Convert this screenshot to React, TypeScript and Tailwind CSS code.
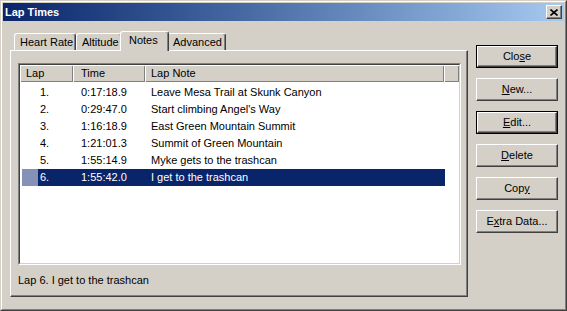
import React from 'react';

const laps = [
  { n: '1.', t: '0:17:18.9', note: 'Leave Mesa Trail at Skunk Canyon' },
  { n: '2.', t: '0:29:47.0', note: "Start climbing Angel's Way" },
  { n: '3.', t: '1:16:18.9', note: 'East Green Mountain Summit' },
  { n: '4.', t: '1:21:01.3', note: 'Summit of Green Mountain' },
  { n: '5.', t: '1:55:14.9', note: 'Myke gets to the trashcan' },
  { n: '6.', t: '1:55:42.0', note: 'I get to the trashcan' },
];

const Btn: React.FC<{ children: React.ReactNode; dflt?: boolean }> = ({ children, dflt }) => (
  <div className={`w-[82px] h-[23px] ${dflt ? 'border border-black' : ''}`}>
    <div className="w-full h-full bg-[#d4d0c8] border border-t-white border-l-white border-r-[#404040] border-b-[#404040] shadow-[inset_-1px_-1px_#808080] flex items-center justify-center leading-[13px]">
      {children}
    </div>
  </div>
);

const Tab: React.FC<{ label: string; w: string; active?: boolean }> = ({ label, w, active }) =>
  active ? (
    <div className={`${w} h-[20px] -mx-[2px] -mb-px relative z-10 bg-[#d4d0c8] rounded-t-[3px] border-l border-t border-white border-r border-r-[#404040] shadow-[inset_-1px_0_#808080] pt-[2px] pl-[8px] leading-[13px]`}>
      {label}
    </div>
  ) : (
    <div className={`${w} h-[17px] bg-[#d4d0c8] rounded-t-[3px] border-l border-t border-white border-r border-r-[#404040] shadow-[inset_-1px_0_#808080] pt-[2px] pl-[5px] leading-[13px]`}>
      {label}
    </div>
  );

const HeaderCell: React.FC<{ w: string; pl: string; children?: React.ReactNode }> = ({ w, pl, children }) => (
  <div className={`${w} h-full ${pl} flex items-center bg-[#d4d0c8] shadow-[inset_1px_1px_#fff,inset_-1px_-1px_#808080]`}>{children}</div>
);

export default function App() {
  return (
    <div className="w-[567px] h-[311px] bg-[#d4d0c8] font-['Liberation_Sans',Arial,sans-serif] text-[11px] text-black border border-t-[#d4d0c8] border-l-[#d4d0c8] border-r-[#404040] border-b-[#404040] overflow-hidden">
      <div className="w-full h-full border border-t-white border-l-white border-r-[#808080] border-b-[#808080] p-px flex flex-col">
        {/* title bar */}
        <div className="h-[18px] shrink-0 bg-linear-to-r from-[#0a246a] to-[#a6caf0] flex items-center justify-between pl-[2px] pr-[2px]">
          <span className="text-white font-bold text-[11px] leading-[13px]">Lap Times</span>
          <div className="w-[16px] h-[14px] bg-[#d4d0c8] border border-t-white border-l-white border-r-[#404040] border-b-[#404040] shadow-[inset_-1px_-1px_#808080] flex items-center justify-center">
            <svg width="8" height="7" viewBox="0 0 8 7">
              <path d="M0.5 0.5 L7.5 6.5 M7.5 0.5 L0.5 6.5" stroke="#000" strokeWidth="1.6" />
            </svg>
          </div>
        </div>

        <div className="flex items-start">
          {/* left tab control */}
          <div className="ml-[7px] pt-[10px] w-[458px]">
            <div className="h-[19px] flex items-end pl-[4px]">
              <Tab label="Heart Rate" w="w-[62px]" />
              <Tab label="Altitude" w="w-[46px]" />
              <Tab label="Notes" w="w-[49px]" active />
              <Tab label="Advanced" w="w-[59px]" />
            </div>
            <div className="h-[247px] border border-t-white border-l-white border-r-[#404040] border-b-[#404040] shadow-[inset_-1px_-1px_#808080] pl-[7px] pt-[12px]">
              {/* list view */}
              <div className="w-[443px] h-[202px] border border-t-[#808080] border-l-[#808080] border-r-white border-b-white">
                <div className="w-full h-full border border-t-[#404040] border-l-[#404040] border-r-[#d4d0c8] border-b-[#d4d0c8] bg-white overflow-hidden">
                  <div className="h-[17px] flex leading-[13px]">
                    <HeaderCell w="w-[53px]" pl="pl-[6px]">Lap</HeaderCell>
                    <HeaderCell w="w-[72px]" pl="pl-[8px]">Time</HeaderCell>
                    <HeaderCell w="w-[299px]" pl="pl-[6px]">Lap Note</HeaderCell>
                    <HeaderCell w="w-[15px]" pl="pl-0" />
                  </div>
                  <div className="pt-[2px]">
                    {laps.map((l, i) => {
                      const sel = i === laps.length - 1;
                      return (
                        <div key={i} className={`h-[17px] flex items-center ml-[2px] leading-[13px] ${sel ? 'text-white' : ''}`}>
                          <div className={`w-[16px] h-full ${sel ? 'bg-[#8591b7]' : ''}`} />
                          <div className={`flex h-full items-center w-[407px] ${sel ? 'bg-[#0a246a]' : ''}`}>
                            <div className="w-[35px] pl-[2px]">{l.n}</div>
                            <div className="w-[72px] pl-[8px]">{l.t}</div>
                            <div className="pl-[6px] whitespace-nowrap">{l.note}</div>
                          </div>
                        </div>
                      );
                    })}
                  </div>
                </div>
              </div>
              <div className="mt-[9px] leading-[13px]">Lap 6. I get to the trashcan</div>
            </div>
          </div>

          {/* right buttons */}
          <div className="ml-[8px] pt-[24px] flex flex-col gap-[10px]">
            <Btn dflt>Clo<span className="underline">s</span>e</Btn>
            <Btn><span className="underline">N</span>ew...</Btn>
            <Btn dflt><span className="underline">E</span>dit...</Btn>
            <Btn><span className="underline">D</span>elete</Btn>
            <Btn>Cop<span className="underline">y</span></Btn>
            <Btn>E<span className="underline">x</span>tra Data...</Btn>
          </div>
        </div>
      </div>
    </div>
  );
}
